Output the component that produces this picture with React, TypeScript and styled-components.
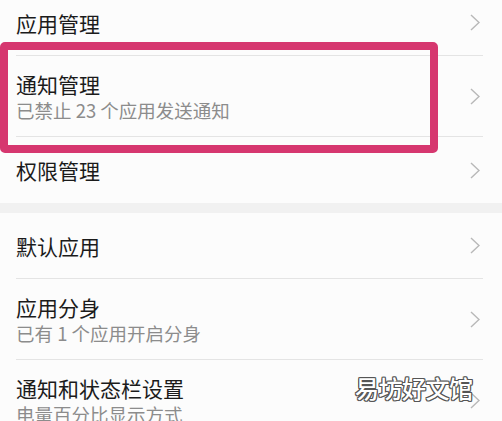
import React from "react";
import styled, { createGlobalStyle } from "styled-components";

const GlobalStyle = createGlobalStyle`
    html, body {
        margin: 0;
        padding: 0;
        background: #fbfbfb;
        overflow: hidden;
    }
    body {
        font-family: "Noto Sans CJK SC", "Noto Sans", sans-serif;
    }
`

type Item = { title: string; sub?: string; first?: boolean };

const groupOne: Item[] = [
    { title: "应用管理", first: true },
    { title: "通知管理", sub: "已禁止 23 个应用发送通知" },
    { title: "权限管理" },
];

const groupTwo: Item[] = [
    { title: "默认应用" },
    { title: "应用分身", sub: "已有 1 个应用开启分身" },
    { title: "通知和状态栏设置", sub: "电量百分比显示方式" },
];

const Chevron = () => (
    <ChevronSvg viewBox="0 0 10 17" width="10" height="17">
        <polyline points="1,1 9,8.5 1,16" fill="none" stroke="#b8b8b8" strokeWidth="1.4" />
    </ChevronSvg>
);

const Row = ({ item, last }: { item: Item; last: boolean }) => (
    <RowWrapper $first={item.first}>
        <RowInner $twoLine={!!item.sub} $last={last}>
            <Texts>
                <Title>{item.title}</Title>
                {item.sub && <Sub>{item.sub}</Sub>}
            </Texts>
            <Chevron />
        </RowInner>
    </RowWrapper>
);

export default function App() {
    return (
        <Page>
            <GlobalStyle />
            <Group>
                {groupOne.map((it, i) => (
                    <Row key={it.title} item={it} last={i === groupOne.length - 1} />
                ))}
            </Group>
            <Gap />
            <Group>
                {groupTwo.map(it => (
                    <Row key={it.title} item={it} last={false} />
                ))}
            </Group>
            <Highlight />
            <Watermark>易坊好文馆</Watermark>
        </Page>
    );
}

const Page = styled.div`
    position: relative;
    width: 502px;
    height: 421px;
    overflow: hidden;
    background: #fbfbfb;
`

const Group = styled.div`
    display: flex;
    flex-direction: column;
    background: #fcfcfc;
`

const Gap = styled.div`
    height: 10px;
    background: #f1f1f1;
`

const RowWrapper = styled.div<{ $first?: boolean }>`
    padding-left: 16px;
    margin-top: ${p => (p.$first ? "-10px" : "0")};
`

const RowInner = styled.div<{ $twoLine: boolean; $last: boolean }>`
    display: flex;
    align-items: center;
    justify-content: space-between;
    margin-right: 19px;
    padding-right: 3px;
    box-sizing: border-box;
    height: ${p => (p.$twoLine ? "81px" : "66px")};
    padding-top: ${p => (p.$twoLine ? "1px" : "0")};
    border-bottom: ${p => (p.$last ? "none" : "1px solid #e4e4e4")};
`

const Texts = styled.div`
    display: flex;
    flex-direction: column;
`

const Title = styled.div`
    font-size: 21px;
    line-height: 26px;
    color: #1b1b1b;
`

const Sub = styled.div`
    font-size: 18.5px;
    line-height: 26px;
    color: #8c8c8c;
`

const ChevronSvg = styled.svg`
    flex-shrink: 0;
    display: block;
`

const Highlight = styled.div`
    position: absolute;
    left: 0;
    top: 42px;
    width: 438px;
    height: 111px;
    box-sizing: border-box;
    border: 8px solid #d6376f;
    border-radius: 5px;
    pointer-events: none;
`

const Watermark = styled.div`
    position: absolute;
    left: 355px;
    top: 372px;
    font-size: 24px;
    line-height: 32px;
    font-weight: 500;
    color: #ffffff;
    letter-spacing: -0.5px;
    text-shadow:
        1px 0 0 #555, -1px 0 0 #555, 0 1px 0 #555, 0 -1px 0 #555,
        1px 1px 0 #555, -1px -1px 0 #555, 1px -1px 0 #555, -1px 1px 0 #555;
`
